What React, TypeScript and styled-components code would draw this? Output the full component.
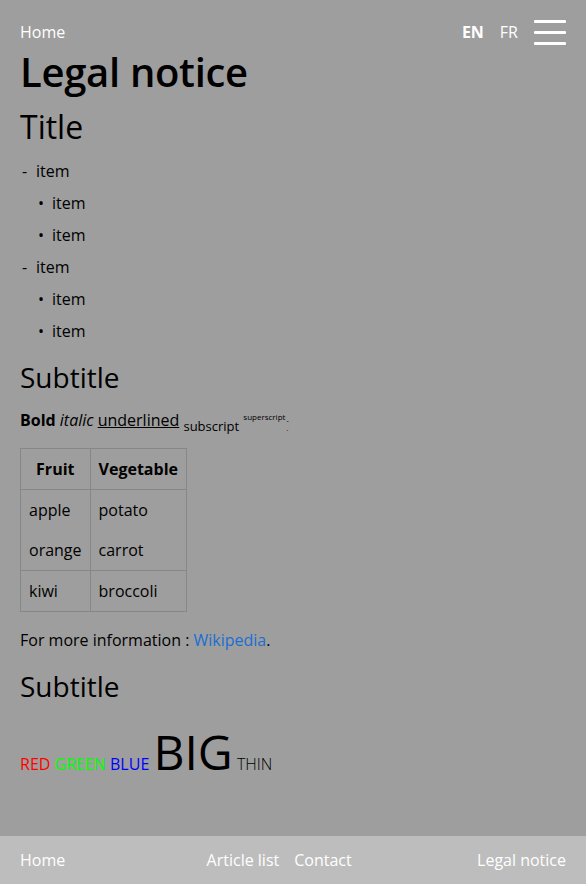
import React from 'react';
import styled, { createGlobalStyle } from 'styled-components';

const GlobalStyle = createGlobalStyle`
  html, body {
    margin: 0;
    padding: 0;
    background: #9e9e9e;
  }
  body {
    font-family: 'Open Sans', 'Noto Sans', sans-serif;
    font-size: 16px;
    color: #000;
  }
`;

const Page = styled.div`
  min-height: 100vh;
  display: flex;
  flex-direction: column;
`;

const Header = styled.header`
  display: flex;
  align-items: center;
  justify-content: space-between;
  height: 40px;
  padding: 12px 20px 0;
`;

const NavLink = styled.a<{ $bold?: boolean }>`
  color: #fff;
  text-decoration: none;
  font-size: 16px;
  font-weight: ${(p) => (p.$bold ? 700 : 400)};
  cursor: pointer;
`;

const HeaderRight = styled.div`
  display: flex;
  align-items: center;
  gap: 16px;
`;

const Burger = styled.button`
  display: flex;
  flex-direction: column;
  justify-content: space-between;
  width: 32px;
  height: 25px;
  padding: 0;
  border: 0;
  background: none;
  cursor: pointer;

  span {
    display: block;
    height: 3px;
    background: #fff;
    border-radius: 1px;
  }
`;

const Main = styled.main`
  flex: 1;
  padding: 0 20px;
`;

const H1 = styled.h1`
  margin: 0;
  font-size: 40px;
  line-height: 40px;
  font-weight: 600;
  letter-spacing: -0.3px;
`;

const H2 = styled.h2`
  margin: 15px 0 0;
  font-size: 32px;
  line-height: 40px;
  font-weight: 400;
`;

const H3 = styled.h3`
  margin: 12px 0 0;
  font-size: 28px;
  line-height: 36px;
  font-weight: 400;
`;

const List = styled.ul<{ $nested?: boolean }>`
  list-style: none;
  margin: ${(p) => (p.$nested ? '0' : '8px 0 0')};
  padding: 0 0 0 ${(p) => (p.$nested ? '16px' : '0')};
`;

const Item = styled.li<{ $marker: string }>`
  line-height: 32px;

  &::before {
    content: '${(p) => p.$marker}';
    display: inline-block;
    width: 16px;
    padding-left: 2px;
    box-sizing: border-box;
  }
`;

const Para = styled.p<{ $gap: number }>`
  margin: ${(p) => p.$gap}px 0 0;
  line-height: 32px;
`;

const Sub = styled.sub`
  font-size: 13px;
`;

const Sup = styled.sup`
  font-size: 8px;
`;

const Stack = styled.span`
  display: inline-flex;
  flex-direction: column;
  margin-left: 1px;
  font-size: 7px;
  line-height: 8px;
  vertical-align: 3px;
`;

const Table = styled.table`
  margin-top: 6px;
  border-collapse: collapse;

  th, td {
    border: 1px solid #878787;
    padding: 0 8px;
    line-height: 40px;
    text-align: left;
    font-weight: 400;
  }

  th {
    font-weight: 700;
    text-align: center;
  }
`;

const Link = styled.a`
  color: #1a6ed2;
  text-decoration: none;
`;

const ColorLine = styled.p`
  margin: 20px 0 0;
  line-height: 56px;
`;

const Word = styled.span<{ $color?: string; $size?: number; $thin?: boolean }>`
  color: ${(p) => p.$color || '#000'};
  font-size: ${(p) => p.$size || 16}px;
  font-weight: ${(p) => (p.$thin ? 300 : 400)};
`;

const Footer = styled.footer`
  display: flex;
  align-items: center;
  justify-content: space-between;
  height: 48px;
  padding: 0 20px;
  background: #bdbdbd;
`;

const FooterGroup = styled.div`
  display: flex;
  gap: 15px;
  margin-left: 16px;
`;

export default function App() {
  return (
    <Page>
      <GlobalStyle />
      <Header>
        <NavLink>Home</NavLink>
        <HeaderRight>
          <NavLink $bold>EN</NavLink>
          <NavLink>FR</NavLink>
          <Burger aria-label="menu">
            <span />
            <span />
            <span />
          </Burger>
        </HeaderRight>
      </Header>
      <Main>
        <H1>Legal notice</H1>
        <H2>Title</H2>
        <List>
          <Item $marker="-">
            item
            <List $nested>
              <Item $marker="•">item</Item>
              <Item $marker="•">item</Item>
            </List>
          </Item>
          <Item $marker="-">
            item
            <List $nested>
              <Item $marker="•">item</Item>
              <Item $marker="•">item</Item>
            </List>
          </Item>
        </List>
        <H3>Subtitle</H3>
        <Para $gap={6}>
          <b>Bold</b> <i>italic</i> <u>underlined</u> <Sub>subscript</Sub>{' '}
          <Sup>superscript</Sup>
          <Stack>
            <span>-</span>
            <span>.</span>
          </Stack>
        </Para>
        <Table>
          <thead>
            <tr>
              <th>Fruit</th>
              <th>Vegetable</th>
            </tr>
          </thead>
          <tbody>
            <tr>
              <td>
                apple
                <br />
                orange
              </td>
              <td>
                potato
                <br />
                carrot
              </td>
            </tr>
            <tr>
              <td>kiwi</td>
              <td>broccoli</td>
            </tr>
          </tbody>
        </Table>
        <Para $gap={12}>
          For more information : <Link>Wikipedia</Link>.
        </Para>
        <H3>Subtitle</H3>
        <ColorLine>
          <Word $color="#ff0000">RED</Word> <Word $color="#00ff00">GREEN</Word>{' '}
          <Word $color="#0000ff">BLUE</Word> <Word $size={48}>BIG</Word>{' '}
          <Word $thin>THIN</Word>
        </ColorLine>
      </Main>
      <Footer>
        <NavLink>Home</NavLink>
        <FooterGroup>
          <NavLink>Article list</NavLink>
          <NavLink>Contact</NavLink>
        </FooterGroup>
        <NavLink>Legal notice</NavLink>
      </Footer>
    </Page>
  );
}
